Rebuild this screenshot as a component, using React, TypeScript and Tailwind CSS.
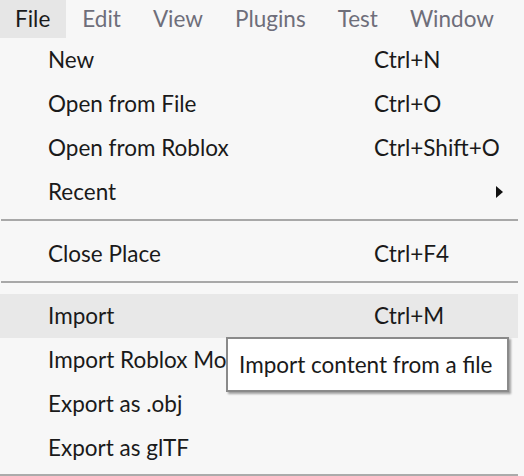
type Item = { label: string; shortcut?: string; sub?: boolean; active?: boolean };

const groups: Item[][] = [
  [
    { label: "New", shortcut: "Ctrl+N" },
    { label: "Open from File", shortcut: "Ctrl+O" },
    { label: "Open from Roblox", shortcut: "Ctrl+Shift+O" },
    { label: "Recent", sub: true },
  ],
  [{ label: "Close Place", shortcut: "Ctrl+F4" }],
  [
    { label: "Import", shortcut: "Ctrl+M", active: true },
    { label: "Import Roblox Model" },
    { label: "Export as .obj" },
    { label: "Export as glTF" },
  ],
];

const menus = ["File", "Edit", "View", "Plugins", "Test", "Window"];

function MenuRow({ item }: { item: Item }) {
  return (
    <div className={`flex h-[44px] items-center pl-[48px] ${item.active ? "bg-[#e8e8e8]" : ""}`}>
      <span className="w-[326px] whitespace-nowrap">{item.label}</span>
      {item.shortcut && <span className="whitespace-nowrap">{item.shortcut}</span>}
      {item.sub && (
        <svg className="ml-[122px]" width="8" height="12" viewBox="0 0 8 12">
          <path d="M0 0 L7 6 L0 12 Z" fill="#111" />
        </svg>
      )}
    </div>
  );
}

export default function App() {
  return (
    <div className="relative h-[476px] w-[524px] overflow-hidden bg-[#f7f7f7] text-[22.5px] text-[#1a1a1a] font-['Lato',sans-serif]">
      <div className="flex h-[38px] items-center">
        {menus.map((m, i) => (
          <div
            key={m}
            className={`flex h-full items-center px-[16px] ${i === 0 ? "bg-[#e6e6e6] pl-[15px] text-[#1a1a1a]" : "text-[#6e6e7a]"}`}
          >
            {m}
          </div>
        ))}
      </div>

      <div className="w-[518px] border-b-2 border-[#ababab] pb-[4px]">
        {groups.map((g, gi) => (
          <div key={gi}>
            {gi > 0 && (
              <div className="h-[18px] pt-[5px]">
                <div className="ml-px h-[2px] bg-[#a8a8a8]" />
              </div>
            )}
            {g.map((item) => (
              <MenuRow key={item.label} item={item} />
            ))}
          </div>
        ))}
      </div>

      <div className="absolute left-[226px] top-[337px] flex h-[55px] w-[283px] items-center border-2 border-[#8a8a8a] bg-white pl-[11px] shadow-[2px_2px_2px_rgba(0,0,0,0.35)] whitespace-nowrap">
        Import content from a file
      </div>
    </div>
  );
}
